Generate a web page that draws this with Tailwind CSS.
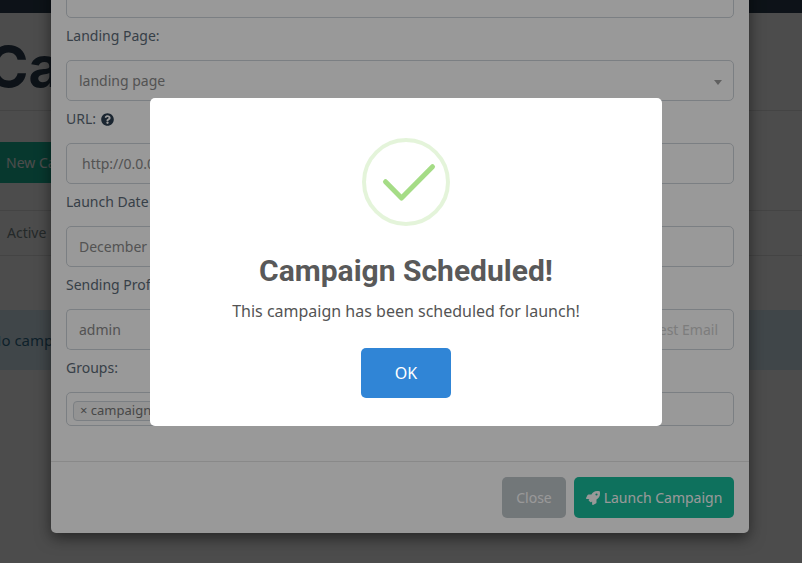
<!DOCTYPE html>
<html lang="en">
<head>
  <meta charset="UTF-8" />
  <title>Campaigns</title>
  <script src="https://cdn.jsdelivr.net/npm/@tailwindcss/browser@4"></script>
</head>
<body class="font-['Noto_Sans',sans-serif] text-[14px]">
  <div class="relative w-[802px] h-[563px] overflow-hidden bg-white">

    <!-- page behind the modal -->
    <div class="h-[13px] bg-[#2c3e50]"></div>
    <div class="h-[98px] border-b border-[#e5e5e5] pt-[20px]">
      <h1 class="ml-[-13px] font-['Inter',sans-serif] font-bold text-[56px] leading-[68px] text-[#2c3e50]">Campaigns</h1>
    </div>
    <div class="h-[100px] border-b border-[#e5e5e5] pt-[31px]">
      <button class="w-[180px] h-[41px] ml-[-20px] pl-[26px] text-left rounded bg-[#18bc9c] text-white">New Campaign</button>
    </div>
    <div class="h-[45px] border-b border-[#e5e5e5] pl-[7px] pt-[11px] text-[#7b8a8b]">Active</div>
    <div class="mt-[54px] h-[60px] bg-[#d9edf7] text-[#31708f] pl-[0px] pt-[19px] text-[15px]">
      <span class="ml-[-10px]">No campaigns created yet. Let's create one!</span>
    </div>

    <div class="absolute inset-0 bg-black/50"></div>

    <!-- New campaign modal, scrolled down -->
    <div class="absolute left-[51px] top-[-23px] w-[698px] rounded-b-[5px] bg-white shadow-[0_5px_15px_rgba(0,0,0,0.5)] text-[#5d6b78]">
      <div class="px-[15px]">
        <div class="h-[41px] rounded-[5px] border border-[#ced4da] pl-[12px] pt-[2px] text-[#8a8a8a]">breaking news</div>

        <div class="mt-[6px] mb-[12px] h-[24px] leading-[24px]">Landing Page:</div>
        <div class="relative h-[41px] rounded-[5px] border border-[#ced4da] pl-[12px] leading-[39px] text-[#8a8a8a]">
          landing page
          <span class="absolute right-[11px] top-[19px] w-0 h-0 border-x-[4px] border-x-transparent border-t-[5px] border-t-[#a0a0a0]"></span>
        </div>

        <div class="mt-[6px] mb-[12px] h-[24px] leading-[24px] flex items-center gap-[5px]">
          URL:
          <svg class="w-[13px] h-[13px]" viewBox="0 0 512 512" fill="#2c3e50"><path d="M504 256c0 136.997-111.043 248-248 248S8 392.997 8 256C8 119.083 119.043 8 256 8s248 111.083 248 248zM262.655 90c-54.497 0-89.255 22.957-116.549 63.758-3.536 5.286-2.353 12.415 2.715 16.258l34.699 26.31c5.205 3.947 12.621 3.008 16.665-2.122 17.864-22.658 30.113-35.797 57.303-35.797 20.429 0 45.698 13.148 45.698 32.958 0 14.976-12.363 22.667-32.534 33.976C247.128 238.528 216 254.941 216 296v4c0 6.627 5.373 12 12 12h56c6.627 0 12-5.373 12-12v-1.333c0-28.462 83.186-29.647 83.186-106.667 0-58.002-60.165-102-116.531-102zM256 338c-25.365 0-46 20.635-46 46 0 25.364 20.635 46 46 46s46-20.636 46-46c0-25.365-20.635-46-46-46z"/></svg>
        </div>
        <div class="h-[41px] rounded-[5px] border border-[#ced4da] pl-[15px] leading-[39px] text-[#8a8a8a]">http://0.0.0.0</div>

        <div class="mt-[6px] mb-[12px] h-[24px] leading-[24px]">Launch Date</div>
        <div class="h-[41px] rounded-[5px] border border-[#ced4da] pl-[12px] leading-[39px] text-[#8a8a8a]">December 8th 2020, 12:00 pm</div>

        <div class="mt-[6px] mb-[12px] h-[24px] leading-[24px]">Sending Profile:</div>
        <div class="flex h-[41px]">
          <div class="flex-1 rounded-l-[5px] border border-r-0 border-[#ced4da] pl-[12px] leading-[39px] text-[#8a8a8a]">admin</div>
          <button class="w-[170px] rounded-r-[5px] border border-[#ced4da] pr-[15px] text-right text-[#d0d0d0]">Send Test Email</button>
        </div>

        <div class="mt-[6px] mb-[12px] h-[24px] leading-[24px]">Groups:</div>
        <div class="h-[34px] rounded-[5px] border border-[#ced4da] pl-[6px] pt-[6px]">
          <span class="inline-flex items-center h-[20px] rounded-[4px] border border-[#ced4da] bg-[#f5f5f5] px-[6px] text-[13px] text-[#777]">× campaign group</span>
        </div>
      </div>
      <div class="mt-[35px] flex justify-end gap-[8px] border-t border-[#e5e5e5] px-[15px] pt-[15px] pb-[15px]">
        <button class="w-[64px] h-[41px] rounded-[5px] bg-[#bfc6ca] text-white">Close</button>
        <button class="w-[160px] h-[41px] rounded-[5px] bg-[#18bc9c] text-white flex items-center justify-center gap-[4px]">
          <svg class="w-[14px] h-[14px]" viewBox="0 0 512 512" fill="currentColor"><path d="M505.12019,19.09375c-1.18945-5.53125-6.65819-11-12.207-12.1875C460.716,0,435.507,0,410.40747,0,307.17523,0,245.26909,55.20312,199.05238,128H94.83772c-16.34763.01562-35.55658,11.875-42.88664,26.48438L2.51562,253.29688A28.4,28.4,0,0,0,0,264a24.00867,24.00867,0,0,0,24.00582,24H127.81618l-22.47457,22.46875c-11.36521,11.36133-12.99607,32.25781,0,45.25L156.24582,406.625c11.15623,11.1875,32.15619,13.15625,45.27726,0l22.47457-22.46875V488a24.00867,24.00867,0,0,0,24.00581,24,28.55934,28.55934,0,0,0,10.707-2.51562l98.72834-49.39063c14.62888-7.29687,26.50776-26.5,26.50776-42.85937V312.79688c72.59753-46.3125,128.03493-108.40626,128.03493-211.09376C512.07526,76.5,512.07526,51.29688,505.12019,19.09375ZM384.04033,168A40,40,0,1,1,424.05,128,40.02322,40.02322,0,0,1,384.04033,168Z"/></svg>
          Launch Campaign
        </button>
      </div>
    </div>

    <div class="absolute inset-0 bg-black/40"></div>

    <!-- Success alert -->
    <div class="absolute left-[150px] top-[98px] w-[512px] h-[328px] rounded-[5px] bg-white flex flex-col items-center">
      <svg class="mt-[40px] w-[88px] h-[88px]" viewBox="0 0 88 88" fill="none">
        <circle cx="44" cy="44" r="42" stroke="#a5dc86" stroke-opacity="0.3" stroke-width="4"/>
        <path d="M23.5 43.7 L39.5 60 L70.5 28.7" stroke="#a5dc86" stroke-width="5" stroke-linecap="round" stroke-linejoin="round"/>
      </svg>
      <h2 class="mt-[27px] font-['Roboto',sans-serif] font-bold text-[30px] leading-[36px] text-[#595959]">Campaign Scheduled!</h2>
      <p class="mt-[9px] text-[16px] leading-[26px] text-[#545454]">This campaign has been scheduled for launch!</p>
      <button class="mt-[24px] w-[90px] h-[50px] rounded-[5px] bg-[#3085d6] text-white text-[16px]">OK</button>
    </div>
  </div>
</body>
</html>
